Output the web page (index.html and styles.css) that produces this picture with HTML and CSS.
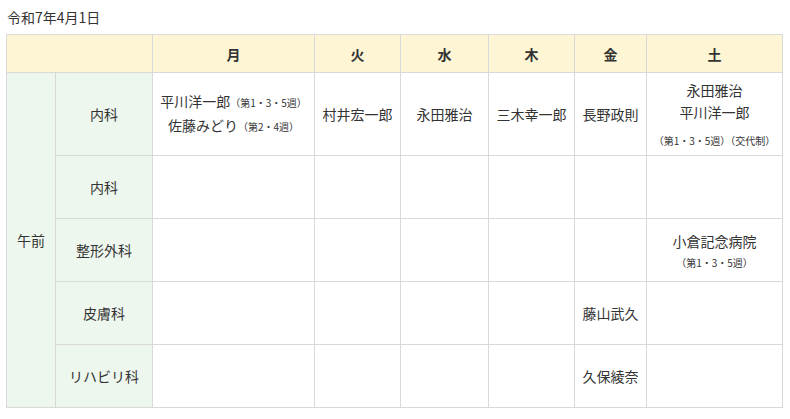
FILE: index.html
```html
<!DOCTYPE html>
<html lang="ja">
<head>
<meta charset="utf-8">
<link rel="stylesheet" href="styles.css">
</head>
<body>
<p class="date">令和7年4月1日</p>
<table class="schedule">
  <colgroup>
    <col class="c-time"><col class="c-dept"><col class="c-mon"><col class="c-tue"><col class="c-wed"><col class="c-thu"><col class="c-fri"><col class="c-sat">
  </colgroup>
  <thead>
    <tr class="head">
      <th colspan="2"></th>
      <th>月</th><th>火</th><th>水</th><th>木</th><th>金</th><th>土</th>
    </tr>
  </thead>
  <tbody>
    <tr class="row-tall">
      <th class="time" rowspan="5">午前</th>
      <th class="dept">内科</th>
      <td>平川洋一郎<small>（第1・3・5週）</small><br>佐藤みどり<small>（第2・4週）</small></td>
      <td>村井宏一郎</td>
      <td>永田雅治</td>
      <td>三木幸一郎</td>
      <td>長野政則</td>
      <td>永田雅治<br>平川洋一郎<span class="note note-gap">（第1・3・5週）（交代制）</span></td>
    </tr>
    <tr class="row">
      <th class="dept">内科</th>
      <td></td><td></td><td></td><td></td><td></td><td></td>
    </tr>
    <tr class="row">
      <th class="dept">整形外科</th>
      <td></td><td></td><td></td><td></td><td></td>
      <td>小倉記念病院<span class="note note-small-gap">（第1・3・5週）</span></td>
    </tr>
    <tr class="row">
      <th class="dept">皮膚科</th>
      <td></td><td></td><td></td><td></td><td>藤山武久</td><td></td>
    </tr>
    <tr class="row">
      <th class="dept">リハビリ科</th>
      <td></td><td></td><td></td><td></td><td>久保綾奈</td><td></td>
    </tr>
  </tbody>
</table>
</body>
</html>
```

FILE: styles.css
```css
html, body {
  margin: 0;
  background: #fff;
}
body {
  padding: 0 6px;
  font-family: "Noto Sans CJK JP", "Noto Sans", sans-serif;
  color: #333;
  font-size: 14px;
}
.date {
  margin: 0;
  padding-left: 1px;
  height: 34px;
  line-height: 34px;
  font-size: 14px;
}
.schedule {
  width: 776px;
  table-layout: fixed;
  border-collapse: collapse;
}
.c-time { width: 49px; }
.c-dept { width: 97px; }
.c-mon { width: 162px; }
.c-tue { width: 86px; }
.c-wed { width: 88px; }
.c-thu { width: 86px; }
.c-fri { width: 72px; }
.c-sat { width: 136px; }
.schedule th,
.schedule td {
  border: 1px solid #d9d9d9;
  padding: 0 4px;
  text-align: center;
  vertical-align: middle;
  line-height: 22px;
  font-weight: normal;
}
.head { height: 38px; }
.head th {
  background: #fdf5d3;
  font-weight: bold;
  padding: 0;
}
.row-tall { height: 83px; }
.row { height: 63px; }
.time, .dept {
  background: #eef7ee;
}
.schedule small {
  font-size: 10px;
}
.note {
  display: block;
  font-size: 10px;
  line-height: 16px;
}
.note-gap {
  margin-top: 10px;
}
.note-small-gap {
  margin-top: 3px;
}
```
